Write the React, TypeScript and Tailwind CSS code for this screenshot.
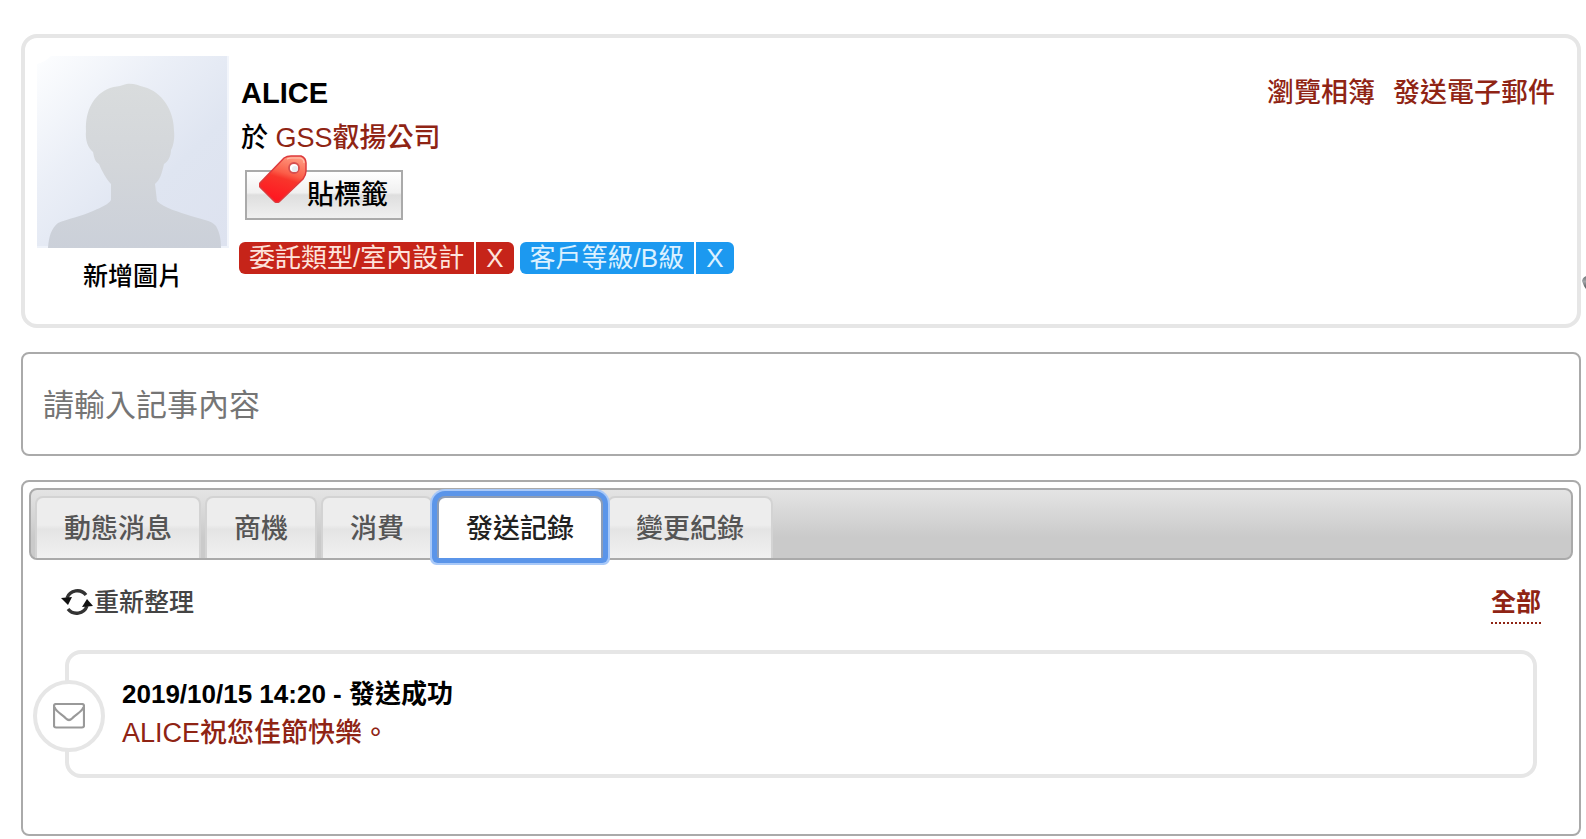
import React, { useState } from "react";

const tabs = ["動態消息", "商機", "消費", "發送記錄", "變更紀錄"];

const labels = [
  { text: "委託類型/室內設計", color: "bg-[#c62419] text-[#fde3dc]" },
  { text: "客戶等級/B級", color: "bg-[#1c99f0] text-[#dcf1ff]" },
];

function Avatar() {
  return (
    <svg viewBox="0 0 192 192" className="block size-48" aria-hidden="true">
      <defs>
        <linearGradient id="sky" x1="0" y1="0" x2="1" y2="1">
          <stop offset="0" stopColor="#fdfeff" />
          <stop offset="0.35" stopColor="#ebeff7" />
          <stop offset="0.65" stopColor="#dfe5f1" />
          <stop offset="1" stopColor="#dde2ef" />
        </linearGradient>
        <linearGradient id="person" x1="0" y1="0" x2="0" y2="1">
          <stop offset="0" stopColor="#d9dcdd" />
          <stop offset="0.5" stopColor="#d3d6da" />
          <stop offset="1" stopColor="#cbd0d9" />
        </linearGradient>
      </defs>
      <path d="M14 0H192V192H0V8Q8 6 14 0Z" fill="url(#sky)" />
      <path
        d="M11 192C12 180 14 173 21 167C30 163 45 160 56 155C65 151 72 148 74 144L74 128C69 123 65 115 62 108C58 106 57 101 56 96C51 92 48 84 49 75C48 54 57 38 73 32C78 30 82 31 86 29C94 26 100 29 107 31C125 36 137 54 137 75C138 83 136 91 134 94C134 100 131 106 127 108C125 117 123 124 118 128L120 145C127 152 142 156 154 160C163 163 174 164 179 170C183 177 184 184 184 192Z"
        fill="url(#person)"
      />
      <path d="M191 0V192" stroke="#f2f5fb" strokeWidth="2" />
      <path d="M0 191H11M184 191H192" stroke="#eef2f9" strokeWidth="2" />
    </svg>
  );
}

function TagIcon() {
  return (
    <svg viewBox="0 0 48 48" className="size-12 shrink-0" aria-hidden="true">
      <defs>
        <linearGradient id="tagRed" x1="0.7" y1="0" x2="0.4" y2="1">
          <stop offset="0" stopColor="#ff9a80" />
          <stop offset="0.38" stopColor="#fb5d48" />
          <stop offset="0.5" stopColor="#f8352b" />
          <stop offset="1" stopColor="#ff1420" />
        </linearGradient>
      </defs>
      <path
        d="M25 3Q28 1 32 1L42 1Q47 3 47 8L47 16Q47 20 44 24L21 46Q18 49 15 46L1 32Q0 30 1 28Z"
        fill="url(#tagRed)"
        stroke="#dd3a3c"
        strokeWidth="1.5"
      />
      <path d="M28 4Q30 3 33 3L41 3Q45 4 45 8" fill="none" stroke="#ffc0ae" strokeWidth="1.2" />
      <circle cx="35" cy="13" r="5" fill="#fff" stroke="#d64f4f" strokeWidth="1.8" />
      <circle cx="36" cy="14" r="3" fill="#e8ecf1" />
    </svg>
  );
}

function RefreshIcon() {
  return (
    <svg viewBox="0 0 32 30" className="h-[30px] w-8 shrink-0" fill="none" aria-hidden="true">
      <path d="M6 11A11 11 0 0 1 25 8" stroke="#333" strokeWidth="3.4" />
      <path d="M26 19A11 11 0 0 1 7 22" stroke="#333" strokeWidth="3.4" />
      <path d="M0 11L11 10L7 18Z" fill="#111" />
      <path d="M32 19L21 20L26 12Z" fill="#111" />
    </svg>
  );
}

function MailIcon() {
  return (
    <svg viewBox="0 0 32 26" className="h-[26px] w-8" fill="none" stroke="#999" strokeWidth="2.2" aria-hidden="true">
      <rect x="1" y="1" width="30" height="23.5" rx="2" />
      <path d="M1.5 4C3 9 9 11 13 15.5Q16 18.500 19 15.5C23 11 29 9 30.500 4" />
    </svg>
  );
}

export default function App() {
  const [active, setActive] = useState(3);

  return (
    <div className="relative overflow-x-hidden bg-white pt-[34px] pr-[5px] pb-[3px] pl-[21px] font-['Liberation_Sans','Noto_Sans_CJK_TC',sans-serif] text-[27px] leading-9 font-medium text-black">
      <main className="flex flex-col gap-6">
        <section className="flex min-h-[294px] items-start rounded-2xl border-4 border-[#e6e6e6] pt-[18px] pr-[22px] pl-3">
          <button type="button" className="flex w-48 shrink-0 flex-col items-center gap-2.5 text-[25px]">
            <Avatar />
            <span className="font-medium">新增圖片</span>
          </button>
          <div className="flex min-w-0 flex-1 flex-col items-start pt-3.5 pl-2.5">
            <div className="flex w-full items-center justify-between pl-0.5">
              <h1 className="text-[29px] leading-[46px] font-bold">ALICE</h1>
              <nav className="flex gap-[18px] text-[#8f2414]">
                <a href="#album">瀏覽相簿</a>
                <a href="#email">發送電子郵件</a>
              </nav>
            </div>
            <p className="pl-0.5 leading-[44px]">
              於 <a href="#company" className="text-[#8f2414]">GSS叡揚公司</a>
            </p>
            <button
              type="button"
              className="mt-2.5 ml-1.5 flex h-[50px] w-[158px] items-center border-2 border-[#aaa] bg-[linear-gradient(#ffffff,#f0f0f0_45%,#dedede_50%,#f0f0f0)] pl-3"
            >
              <span className="-mt-8 shrink-0">
                <TagIcon />
              </span>
              <span className="font-medium">貼標籤</span>
            </button>
            <ul className="mt-[22px] flex gap-1.5 text-[26px] leading-8 font-normal">
              {labels.map((label) => (
                <li key={label.text} className="flex gap-0.5">
                  <span className={`rounded-l-md px-2.5 ${label.color}`}>{label.text}</span>
                  <button type="button" aria-label={`移除 ${label.text}`} className={`rounded-r-md px-2.5 ${label.color}`}>
                    X
                  </button>
                </li>
              ))}
            </ul>
          </div>
        </section>

        <input
          type="text"
          aria-label="請輸入記事內容"
          placeholder="請輸入記事內容"
          className="h-[104px] w-full rounded-lg border-2 border-[#aaa] px-5 pt-1 text-[31px] font-normal placeholder:text-[#757575]"
        />

        <section className="min-h-[356px] rounded-lg border-2 border-[#aaa] p-1.5">
          <div
            role="tablist"
            className="flex h-[72px] items-end gap-1 rounded-lg border-2 border-[#aaa] bg-linear-to-b from-[#e4e4e4] from-0% to-[#cacaca] to-70% pl-1"
          >
            {tabs.map((tab, i) => (
              <button
                key={tab}
                type="button"
                role="tab"
                aria-selected={i === active}
                onClick={() => setActive(i)}
                className={
                  i === active
                    ? "z-10 h-[62px] rounded-t-lg rounded-b-xs border-2 border-b-0 border-[#8e9db5] bg-white px-[27px] pt-0.5 font-medium text-[#212121] shadow-[0_0_0_5px_#5b95e9,0_0_0_7px_#a9c9f8] outline-none"
                    : "h-[62px] rounded-t-lg border-2 border-b-0 border-[#d3d3d3] bg-[linear-gradient(#ededed_45%,#e4e4e4_52%,#f1f1f1)] px-[27px] pt-0.5 font-medium text-[#555]"
                }
              >
                {tab}
              </button>
            ))}
          </div>

          <div className="flex items-start justify-between pt-6 pr-8 pl-8">
            <button type="button" className="flex items-center gap-px text-[25px] font-medium text-[#444]">
              <RefreshIcon />
              重新整理
            </button>
            <a href="#all" className="border-b-2 border-dotted border-[#8f2414] pb-0.5 text-[25px] font-bold text-[#8f2414]">
              全部
            </a>
          </div>

          <article className="mt-[26px] mr-9 ml-1 flex items-start">
            <div className="z-10 mt-[30px] -mr-10 flex size-[72px] shrink-0 items-center justify-center rounded-full border-4 border-[#e6e6e6] bg-white">
              <MailIcon />
            </div>
            <div className="min-h-32 flex-1 rounded-2xl border-4 border-[#e6e6e6] pt-5 pl-[53px]">
              <h2 className="text-[26px] leading-10 font-bold">2019/10/15 14:20 - 發送成功</h2>
              <a href="#message" className="block leading-[38px] text-[#8f2414]">
                ALICE祝您佳節快樂。
              </a>
            </div>
          </article>
        </section>
      </main>

      <svg viewBox="0 0 24 24" className="absolute top-[272px] -right-[19px] size-6" aria-hidden="true">
        <defs>
          <linearGradient id="knob" x1="0" y1="0" x2="0" y2="1">
            <stop offset="0" stopColor="#6e7376" />
            <stop offset="0.35" stopColor="#a3a7aa" />
            <stop offset="0.7" stopColor="#5f6366" />
            <stop offset="1" stopColor="#c4c6c8" />
          </linearGradient>
          <filter id="soft">
            <feGaussianBlur stdDeviation="0.7" />
          </filter>
        </defs>
        <path d="M1 9Q2 4 7 4H24V20H10Q5 19 3 14Z" fill="url(#knob)" filter="url(#soft)" />
      </svg>
    </div>
  );
}
